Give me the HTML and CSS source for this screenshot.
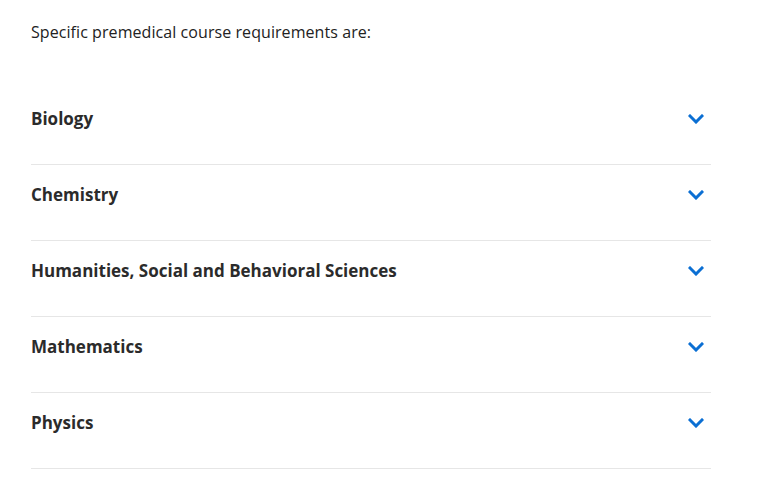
FILE: index.html
```html
<!DOCTYPE html>
<html>
<head>
<meta charset="utf-8">
<link rel="stylesheet" href="styles.css">
</head>
<body>
<main class="page">
  <p class="intro">Specific premedical course requirements are:</p>
  <div class="accordion">
    <div class="item"><span class="title">Biology</span><svg class="chev" viewBox="0 0 16 10" width="16" height="10"><path d="M2 2 L8 8 L14 2" fill="none" stroke="#0b6fd3" stroke-width="3" stroke-linecap="square"/></svg></div>
    <div class="item"><span class="title">Chemistry</span><svg class="chev" viewBox="0 0 16 10" width="16" height="10"><path d="M2 2 L8 8 L14 2" fill="none" stroke="#0b6fd3" stroke-width="3" stroke-linecap="square"/></svg></div>
    <div class="item"><span class="title">Humanities, Social and Behavioral Sciences</span><svg class="chev" viewBox="0 0 16 10" width="16" height="10"><path d="M2 2 L8 8 L14 2" fill="none" stroke="#0b6fd3" stroke-width="3" stroke-linecap="square"/></svg></div>
    <div class="item"><span class="title">Mathematics</span><svg class="chev" viewBox="0 0 16 10" width="16" height="10"><path d="M2 2 L8 8 L14 2" fill="none" stroke="#0b6fd3" stroke-width="3" stroke-linecap="square"/></svg></div>
    <div class="item"><span class="title">Physics</span><svg class="chev" viewBox="0 0 16 10" width="16" height="10"><path d="M2 2 L8 8 L14 2" fill="none" stroke="#0b6fd3" stroke-width="3" stroke-linecap="square"/></svg></div>
  </div>
</main>
</body>
</html>
```
FILE: styles.css
```css
html, body { margin: 0; padding: 0; background: #fff; }
body { font-family: "Open Sans", "Noto Sans", sans-serif; color: #222; }
.page { width: 680px; padding: 20px 0 0 31px; }
.intro { margin: 0 0 45px; font-size: 16px; line-height: 24px; color: #222; letter-spacing: 0.07px; }
.item {
  display: flex; align-items: center; justify-content: space-between;
  padding: 18px 7px 33px 0;
  border-bottom: 1px solid #e6e6e6;
}
.title { font-size: 17px; font-weight: 700; line-height: 24px; color: #2b2b2b; }
.chev { display: block; }
```
